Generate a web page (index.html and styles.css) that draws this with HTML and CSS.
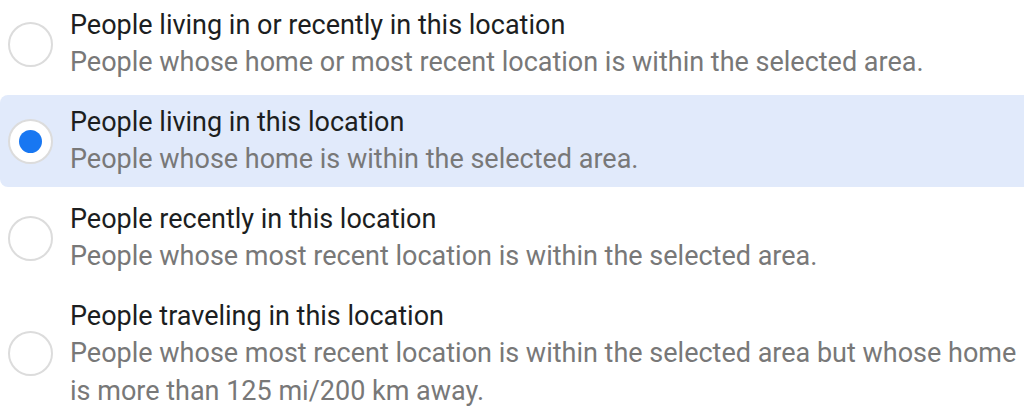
FILE: index.html
```html
<!DOCTYPE html>
<html lang="en">
<head>
<meta charset="utf-8">
<title>Location options</title>
<link rel="stylesheet" href="styles.css">
</head>
<body>
<ul class="options">
  <li class="option">
    <span class="radio"></span>
    <div class="text">
      <div class="title">People living in or recently in this location</div>
      <div class="desc">People whose home or most recent location is within the selected area.</div>
    </div>
  </li>
  <li class="option selected">
    <span class="radio"><span class="dot"></span></span>
    <div class="text">
      <div class="title">People living in this location</div>
      <div class="desc">People whose home is within the selected area.</div>
    </div>
  </li>
  <li class="option">
    <span class="radio"></span>
    <div class="text">
      <div class="title">People recently in this location</div>
      <div class="desc">People whose most recent location is within the selected area.</div>
    </div>
  </li>
  <li class="option">
    <span class="radio"></span>
    <div class="text">
      <div class="title">People traveling in this location</div>
      <div class="desc">People whose most recent location is within the selected area but whose home is more than 125 mi/200 km away.</div>
    </div>
  </li>
</ul>
</body>
</html>
```
FILE: styles.css
```css
html, body {
  margin: 0;
  padding: 0;
  background: #ffffff;
  overflow: hidden;
}

body {
  font-family: Roboto, "Liberation Sans", sans-serif;
  font-size: 27px;
  line-height: 37.5px;
}

.options {
  list-style: none;
  margin: -2px 0 0 0;
  padding: 0;
  width: 1036px;
  display: flex;
  flex-direction: column;
  gap: 5px;
}

.option {
  display: flex;
  align-items: center;
  gap: 17px;
  padding: 8.5px 12px 8.5px 8px;
  border-radius: 8px;
}

.option.selected {
  background: #e1eafb;
}

.radio {
  flex: none;
  width: 45px;
  height: 45px;
  box-sizing: border-box;
  border: 2px solid #dcdcdc;
  border-radius: 50%;
  background: #ffffff;
  display: flex;
  align-items: center;
  justify-content: center;
}

.dot {
  width: 23px;
  height: 23px;
  border-radius: 50%;
  background: #1877f2;
}

.text {
  width: 954px;
}

.title {
  color: #1c1e21;
}

.desc {
  color: #787878;
}
```
